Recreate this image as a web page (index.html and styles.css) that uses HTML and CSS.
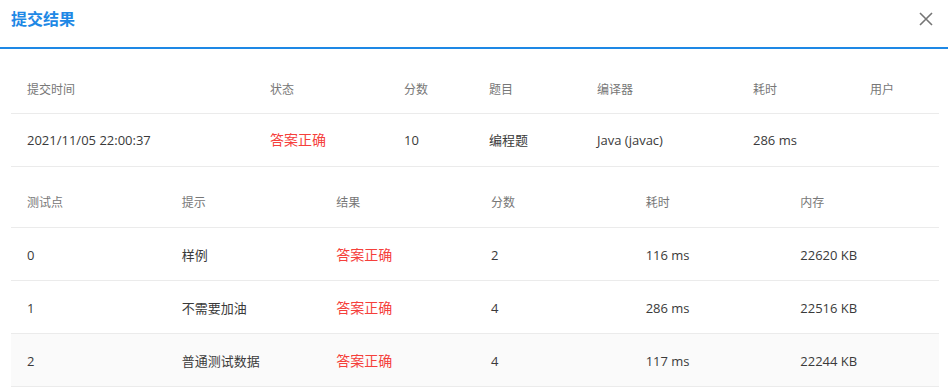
FILE: index.html
```html
<!DOCTYPE html>
<html lang="zh-CN">
<head>
  <meta charset="UTF-8">
  <title>提交结果</title>
  <link rel="stylesheet" href="styles.css">
</head>
<body>
  <div class="dialog">
    <div class="dialog-header">
      <span class="dialog-title">提交结果</span>
      <button class="close-button" aria-label="关闭">
        <svg width="14" height="14" viewBox="0 0 14 14">
          <path d="M1 1 L13 13 M13 1 L1 13" stroke="#757575" stroke-width="1.6" fill="none"/>
        </svg>
      </button>
    </div>

    <div class="dialog-body">
      <table class="summary">
        <colgroup>
          <col class="w243">
          <col class="w134">
          <col class="w85">
          <col class="w108">
          <col class="w156">
          <col class="w117">
          <col class="w85">
        </colgroup>
        <thead>
          <tr>
            <th>提交时间</th>
            <th>状态</th>
            <th>分数</th>
            <th>题目</th>
            <th>编译器</th>
            <th>耗时</th>
            <th>用户</th>
          </tr>
        </thead>
        <tbody>
          <tr>
            <td>2021/11/05 22:00:37</td>
            <td><span class="accepted">答案正确</span></td>
            <td>10</td>
            <td>编程题</td>
            <td>Java (javac)</td>
            <td>286 ms</td>
            <td></td>
          </tr>
        </tbody>
      </table>

      <table class="cases">
        <thead>
          <tr>
            <th>测试点</th>
            <th>提示</th>
            <th>结果</th>
            <th>分数</th>
            <th>耗时</th>
            <th>内存</th>
          </tr>
        </thead>
        <tbody>
          <tr>
            <td>0</td>
            <td>样例</td>
            <td><span class="accepted">答案正确</span></td>
            <td>2</td>
            <td>116 ms</td>
            <td>22620 KB</td>
          </tr>
          <tr>
            <td>1</td>
            <td>不需要加油</td>
            <td><span class="accepted">答案正确</span></td>
            <td>4</td>
            <td>286 ms</td>
            <td>22516 KB</td>
          </tr>
          <tr class="hover">
            <td>2</td>
            <td>普通测试数据</td>
            <td><span class="accepted">答案正确</span></td>
            <td>4</td>
            <td>117 ms</td>
            <td>22244 KB</td>
          </tr>
        </tbody>
      </table>
    </div>
  </div>
</body>
</html>
```

FILE: styles.css
```css
body {
  margin: 0;
  background: #ffffff;
  font-family: "Open Sans", "Noto Sans CJK SC", sans-serif;
  color: #333;
}

.dialog {
  width: 948px;
  height: 387px;
  overflow: hidden;
}

.dialog-header {
  display: flex;
  align-items: flex-start;
  justify-content: space-between;
  height: 49px;
  box-sizing: border-box;
  padding: 8px 15px 0 11px;
  border-bottom: 2px solid #1e88e5;
}

.dialog-title {
  font-size: 16px;
  line-height: 22px;
  font-weight: bold;
  color: #1e88e5;
}

.close-button {
  display: flex;
  margin-top: 4px;
  padding: 0;
  border: none;
  background: none;
  cursor: pointer;
}

.dialog-body {
  padding: 12px 9px 0 11px;
}

table {
  width: 928px;
  border-collapse: collapse;
  table-layout: fixed;
}

.w243 { width: 243px; }
.w134 { width: 134px; }
.w85 { width: 85px; }
.w108 { width: 108px; }
.w156 { width: 156px; }
.w117 { width: 117px; }

th, td {
  text-align: left;
  line-height: 20px;
  padding: 16px 16px;
  border-bottom: 1px solid #ebebeb;
  white-space: nowrap;
}

th {
  font-size: 12px;
  font-weight: normal;
  color: #777;
}

td {
  font-size: 13px;
  color: #3a3a3a;
}

.summary th {
  padding-top: 19px;
  padding-bottom: 13px;
}

.cases th {
  padding-top: 26px;
  padding-bottom: 14px;
}

.cases td {
  padding-top: 17px;
  padding-bottom: 15px;
}

.accepted {
  color: #f5403b;
  font-size: 14px;
}

.hover td {
  background: #fafafa;
}
```
